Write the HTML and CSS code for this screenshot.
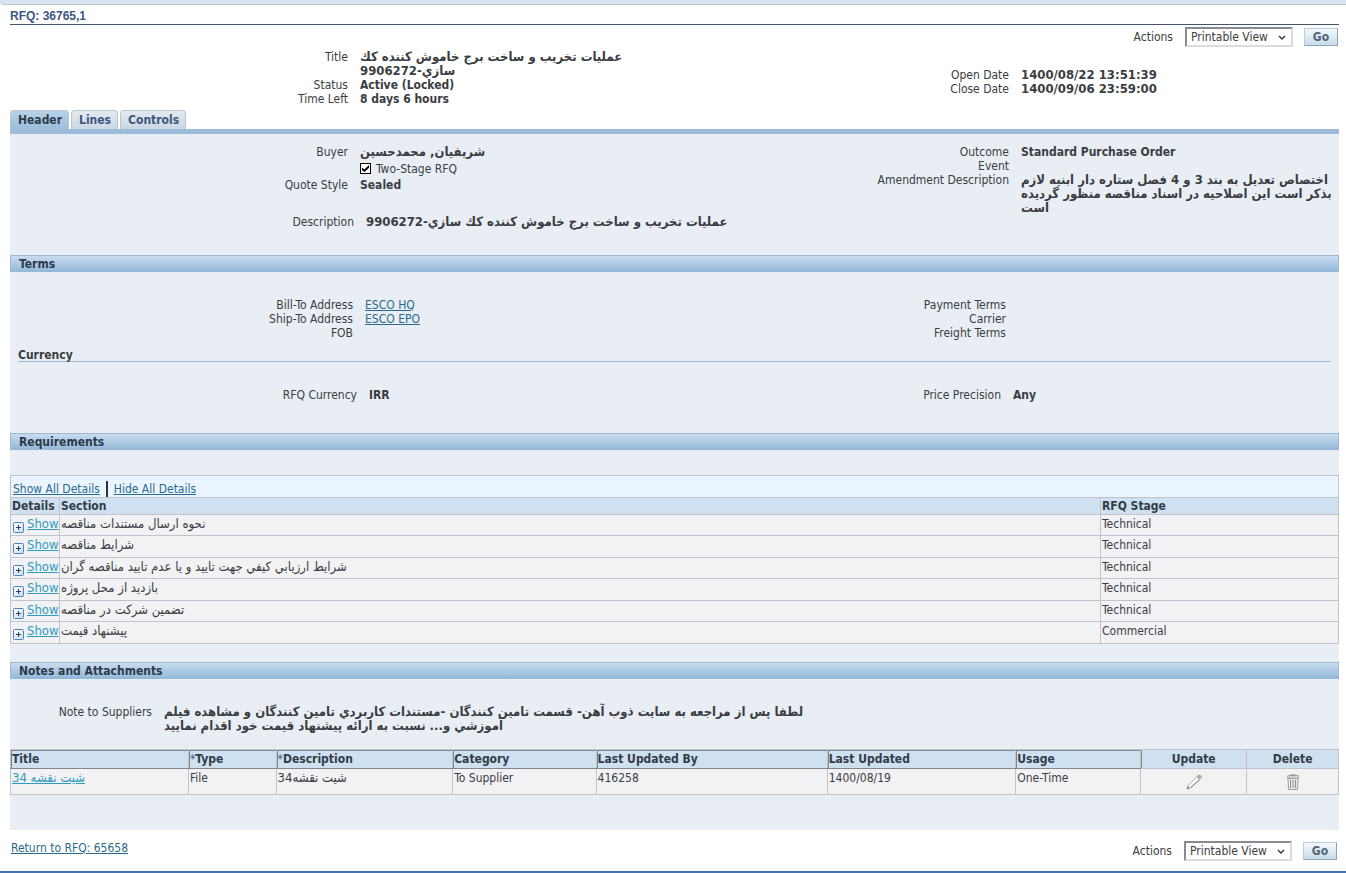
FILE: index.html
```html
<!DOCTYPE html>
<html lang="en">
<head>
<meta charset="utf-8">
<title>RFQ: 36765,1</title>
<link rel="stylesheet" href="styles.css">
</head>
<body>
<svg class="sprite" aria-hidden="true">
  <defs>
    <linearGradient id="plus-fill" x1="0" y1="0" x2="1" y2="1">
      <stop offset="0" stop-color="#ffffff"/>
      <stop offset="1" stop-color="#c3dcf2"/>
    </linearGradient>
    <symbol id="plus" viewBox="0 0 11 11">
      <rect x="0.5" y="0.5" width="10" height="10" rx="1" fill="url(#plus-fill)" stroke="#4d82ba"/>
      <path d="M3 5.5h5M5.500 3v5" stroke="#2e4055" fill="none"/>
    </symbol>
    <symbol id="chevron" viewBox="0 0 8 6">
      <path d="M1 1l3 3 3-3" stroke="#3a3a3a" stroke-width="1.5" fill="none"/>
    </symbol>
  </defs>
</svg>
<div class="topbar"></div>
<main class="page">
  <h1 class="page-title">RFQ: 36765,1</h1>
  <form class="actions">
    <label for="actions-top">Actions</label>
    <span class="select-box">
      <select id="actions-top"><option>Printable View</option></select>
      <svg class="chevron" aria-hidden="true"><use href="#chevron"/></svg>
    </span>
    <button class="go" type="button">Go</button>
  </form>

  <div class="columns summary">
    <dl class="fields">
      <dt>Title</dt><dd class="wide">عمليات تخريب و ساخت برج خاموش كننده كك<br>سازي-9906272</dd>
      <dt>Status</dt><dd>Active (Locked)</dd>
      <dt>Time Left</dt><dd>8 days 6 hours</dd>
    </dl>
    <dl class="fields dates">
      <dt>Open Date</dt><dd class="wide">1400/08/22 13:51:39</dd>
      <dt>Close Date</dt><dd class="wide">1400/09/06 23:59:00</dd>
    </dl>
  </div>

  <nav class="tabs">
    <a class="tab active" href="#">Header</a>
    <a class="tab" href="#">Lines</a>
    <a class="tab" href="#">Controls</a>
  </nav>

  <div class="panel">
    <div class="columns overview">
      <dl class="fields">
        <dt>Buyer</dt><dd class="wide">شريفيان, محمدحسين</dd>
        <dt></dt><dd class="check-row"><input class="check" type="checkbox" id="two-stage" checked><label for="two-stage">Two-Stage RFQ</label></dd>
        <dt>Quote Style</dt><dd>Sealed</dd>
      </dl>
      <dl class="fields">
        <dt>Outcome</dt><dd>Standard Purchase Order</dd>
        <dt>Event</dt><dd></dd>
        <dt>Amendment Description</dt><dd class="wide">اختصاص تعديل به بند 3 و 4 فصل ستاره دار ابنيه لازم<br>بذكر است اين اصلاحيه در اسناد مناقصه منظور گرديده<br>است</dd>
      </dl>
    </div>
    <dl class="fields description">
      <dt>Description</dt><dd class="wide">عمليات تخريب و ساخت برج خاموش كننده كك سازي-9906272</dd>
    </dl>

    <h2 class="section">Terms</h2>
    <div class="columns terms">
      <dl class="fields">
        <dt>Bill-To Address</dt><dd><a href="#">ESCO HQ</a></dd>
        <dt>Ship-To Address</dt><dd><a href="#">ESCO EPO</a></dd>
        <dt>FOB</dt><dd></dd>
      </dl>
      <dl class="fields">
        <dt>Payment Terms</dt><dd></dd>
        <dt>Carrier</dt><dd></dd>
        <dt>Freight Terms</dt><dd></dd>
      </dl>
    </div>
    <h3 class="subsection">Currency</h3>
    <div class="columns currency">
      <dl class="fields"><dt>RFQ Currency</dt><dd>IRR</dd></dl>
      <dl class="fields"><dt>Price Precision</dt><dd>Any</dd></dl>
    </div>

    <h2 class="section">Requirements</h2>
    <div class="toolbar">
      <a href="#">Show All Details</a><span class="divider"></span><a href="#">Hide All Details</a>
    </div>
    <table class="grid requirements">
      <colgroup><col class="c-details"><col><col class="c-stage"></colgroup>
      <thead><tr><th>Details</th><th>Section</th><th>RFQ Stage</th></tr></thead>
      <tbody>
        <tr><td><a class="show" href="#"><svg class="plus"><use href="#plus"/></svg><span>Show</span></a></td><td class="wide">نحوه ارسال مستندات مناقصه</td><td>Technical</td></tr>
        <tr><td><a class="show" href="#"><svg class="plus"><use href="#plus"/></svg><span>Show</span></a></td><td class="wide">شرايط مناقصه</td><td>Technical</td></tr>
        <tr><td><a class="show" href="#"><svg class="plus"><use href="#plus"/></svg><span>Show</span></a></td><td class="wide">شرايط ارزيابي كيفي جهت تاييد و يا عدم تاييد مناقصه گران</td><td>Technical</td></tr>
        <tr><td><a class="show" href="#"><svg class="plus"><use href="#plus"/></svg><span>Show</span></a></td><td class="wide">بازديد از محل پروژه</td><td>Technical</td></tr>
        <tr><td><a class="show" href="#"><svg class="plus"><use href="#plus"/></svg><span>Show</span></a></td><td class="wide">تضمين شركت در مناقصه</td><td>Technical</td></tr>
        <tr><td><a class="show" href="#"><svg class="plus"><use href="#plus"/></svg><span>Show</span></a></td><td class="wide">پيشنهاد قيمت</td><td>Commercial</td></tr>
      </tbody>
    </table>

    <h2 class="section">Notes and Attachments</h2>
    <dl class="fields note">
      <dt>Note to Suppliers</dt><dd class="wide">لطفا پس از مراجعه به سايت ذوب آهن- قسمت تامين كنندگان -مستندات كاربردي تامين كنندگان و مشاهده فيلم<br>آموزشي و... نسبت به ارائه پيشنهاد قيمت خود اقدام نماييد</dd>
    </dl>
    <table class="grid attachments">
      <colgroup><col class="a-title"><col class="a-type"><col class="a-desc"><col class="a-cat"><col class="a-by"><col class="a-date"><col class="a-usage"><col class="a-update"><col></colgroup>
      <thead><tr>
        <th class="sortable">Title</th>
        <th class="sortable"><span class="req">*</span>Type</th>
        <th class="sortable"><span class="req">*</span>Description</th>
        <th class="sortable">Category</th>
        <th class="sortable">Last Updated By</th>
        <th class="sortable">Last Updated</th>
        <th class="sortable">Usage</th>
        <th class="center edge">Update</th>
        <th class="center">Delete</th>
      </tr></thead>
      <tbody><tr>
        <td class="wide"><a class="light" href="#">شيت نقشه 34</a></td>
        <td>File</td>
        <td class="wide">شيت نقشه34</td>
        <td>To Supplier</td>
        <td>416258</td>
        <td>1400/08/19</td>
        <td>One-Time</td>
        <td class="center"><button class="icon" type="button" aria-label="Update" disabled><svg width="16" height="16" viewBox="0 0 16 16"><path d="M1 15l1.500-4L11 2.500Q13 .5 14.500 1.500T14.500 5L5 13.500Z" fill="#fbfbfb" stroke="#a4a4a4" stroke-width=".9"/><path d="M10.500 3L13 .8q2 0 2.200 2.200L13 5.500Z" fill="#a9a9a9"/><path d="M5 13.500L13.500 5.500" stroke="#7d7d7d" fill="none"/><path d="M1 15l1-2.500L3.500 14Z" fill="#666"/></svg></button></td>
        <td class="center"><button class="icon" type="button" aria-label="Delete" disabled><svg width="16" height="16" viewBox="0 0 16 16"><path d="M3 4.500h10l-.5 11h-9Z" fill="#ececec" stroke="#9c9c9c"/><rect x="2.500" y="1.500" width="11" height="3" rx="1" fill="#d0d0d0" stroke="#9c9c9c"/><path d="M6 1.500V.5h4v1" fill="none" stroke="#aaa"/><path d="M5.500 6v8M8 6v8M10.500 6v8" stroke="#8c8c8c"/></svg></button></td>
      </tr></tbody>
    </table>
  </div>

  <footer class="footer">
    <a href="#">Return to RFQ: 65658</a>
    <form class="actions">
      <label for="actions-bottom">Actions</label>
      <span class="select-box">
        <select id="actions-bottom"><option>Printable View</option></select>
        <svg class="chevron" aria-hidden="true"><use href="#chevron"/></svg>
      </span>
      <button class="go" type="button">Go</button>
    </form>
  </footer>
</main>
<div class="bottom-rule"></div>
</body>
</html>
```
FILE: styles.css
```css
* { box-sizing: border-box; }
body, h1, h2, h3, dl, dd { margin: 0; }
body {
  background: #fff;
  color: #3a3d42;
  font: 12px/14px "DejaVu Sans Condensed", "DejaVu Sans", "Noto Sans", sans-serif;
}
.sprite { position: absolute; width: 0; height: 0; }
a { color: #2a6a8c; }
.wide { font-size: 13px; }
.topbar {
  height: 5px;
  background: #d8e4ee;
  border-bottom: 1px solid #b4c6d4;
  border-bottom-left-radius: 4px;
}
.page { margin: 0 7px 0 10px; }
.page-title {
  height: 20px;
  padding-top: 4px;
  border-bottom: 1px solid #44546c;
  color: #3c5583;
  font: bold 12px/14px "Liberation Sans", Arial, sans-serif;
}

/* Actions bar */
.actions {
  display: flex;
  justify-content: flex-end;
  align-items: center;
  padding: 2px 1px 0 0;
}
.select-box { position: relative; margin: 0 11px 0 12px; }
select {
  display: block;
  appearance: none;
  width: 108px;
  height: 20px;
  padding: 0 4px;
  background: #fff;
  border: 2px solid;
  border-color: #8a8a92 #dcdcdc #dcdcdc #8a8a92;
  border-radius: 0;
  color: inherit;
  font: inherit;
}
.chevron {
  position: absolute;
  right: 7px;
  top: 8px;
  width: 8px;
  height: 6px;
  pointer-events: none;
}
.go {
  width: 34px;
  height: 18px;
  padding: 0;
  background: linear-gradient(#f4f9fc, #c5dcea);
  border: 1px solid;
  border-color: #bccbd8 #8ea3b5 #8ea3b5 #bccbd8;
  color: #566478;
  font: inherit;
  font-weight: bold;
}

/* Label and value pairs */
.columns { display: grid; grid-template-columns: 661fr 668fr; }
.fields {
  display: grid;
  grid-template-columns: 338px minmax(0, 1fr);
  column-gap: 12px;
  align-content: start;
}
dt { text-align: right; white-space: nowrap; }
dd { min-height: 14px; font-weight: bold; white-space: nowrap; }
dd a { font-weight: normal; }
.summary { margin-top: 3px; }
.dates { padding-top: 18px; }
.description { grid-template-columns: 344px minmax(0, 1fr); margin-bottom: 26px; }
.terms { padding-top: 26px; }
.terms .fields { grid-template-columns: 343px minmax(0, 1fr); }
.terms .fields + .fields { grid-template-columns: 335px minmax(0, 1fr); }
.currency { margin: 26px 0 31px; }
.currency .fields { grid-template-columns: 347px minmax(0, 1fr); }
.currency .fields + .fields { grid-template-columns: 330px minmax(0, 1fr); }
.note { grid-template-columns: 142px minmax(0, 1fr); margin: 26px 0 16px; }
.check-row {
  display: flex;
  align-items: center;
  gap: 5px;
  height: 19px;
  font-weight: normal;
}
.check {
  appearance: none;
  position: relative;
  width: 11px;
  height: 11px;
  margin: 0;
  background: #fff;
  border: 1px solid #000;
}
.check:checked::before {
  content: "";
  position: absolute;
  inset: 1px;
  background: #000;
  clip-path: polygon(0 35%, 35% 65%, 100% 0, 100% 38%, 35% 100%, 0 70%);
}

/* Tabs */
.tabs { display: flex; gap: 2px; height: 19px; margin-top: 4px; }
.tab {
  padding: 2px 6px 0 7px;
  background: linear-gradient(#e3e9ef, #cbd8e5);
  border: 1px solid #bcc6cf;
  border-bottom: 0;
  border-radius: 4px 4px 0 0;
  color: #405680;
  font-weight: bold;
  line-height: 14px;
  text-decoration: none;
}
.tab.active { background: linear-gradient(#b7d2e8, #9cbedb); color: #2f3b4c; }

.panel {
  padding-bottom: 35px;
  background: #e9eef5;
  border-top: 5px solid #9cbcd9;
}
.overview { padding-top: 11px; }
.section {
  height: 17px;
  padding: 1px 8px;
  background: linear-gradient(#c8dcee, #92b7d8);
  border: 1px solid #9db8d0;
  border-bottom: 0;
  color: #2c3a49;
  font-size: 12px;
  line-height: 15px;
}
.subsection {
  margin: 9px 8px 0;
  border-bottom: 1px solid #9fb8cf;
  font-size: 12px;
  line-height: 12px;
}

/* Tables */
.toolbar {
  display: flex;
  align-items: center;
  gap: 6px;
  height: 22px;
  margin-top: 25px;
  padding: 4px 2px 0;
  background: #ebf5ff;
  border: 1px solid #c0c6ce;
  border-bottom: 0;
}
.divider { width: 2px; height: 16px; background: #333; }
.grid { width: 100%; border-collapse: collapse; table-layout: fixed; }
.grid th, .grid td {
  padding: 2px 1px 0;
  border: 1px solid #c0c4cc;
  text-align: left;
  vertical-align: top;
  white-space: nowrap;
}
.grid th { height: 17px; padding-top: 1px; background: #cfe0f0; color: #323c48; }
.grid td { height: 21px; background: #f2f2f5; }
.grid .center { text-align: center; }
.requirements { margin-bottom: 18px; }
.requirements tr:nth-child(even) td { height: 22px; }
.c-details { width: 49px; }
.c-stage { width: 238px; }
.show {
  display: flex;
  gap: 3px;
  height: 16px;
  padding-left: 1px;
  color: #2f9bc0;
  font-size: 13px;
}
.light { color: #2f9bc0; }
.plus { width: 11px; height: 11px; margin-top: 5px; flex: none; }
.attachments th { height: 19px; padding-top: 2px; }
.attachments td { height: 26px; }
.attachments .sortable { box-shadow: inset 1px 1px #80868c; border-bottom-color: #80868c; }
.attachments .edge { box-shadow: inset 1px 0 #80868c; }
.req { color: #3c5f95; font-weight: normal; }
.a-title { width: 13.4%; }
.a-type { width: 6.6%; }
.a-desc { width: 13.3%; }
.a-cat { width: 10.8%; }
.a-by { width: 17.4%; }
.a-date { width: 14.2%; }
.a-usage { width: 9.4%; }
.a-update { width: 8%; }
.icon { padding: 3px 0 0; background: none; border: 0; }
.icon svg { display: block; }

.footer {
  display: flex;
  justify-content: space-between;
  align-items: flex-start;
  padding: 11px 1px 10px;
}
.footer .actions { padding-top: 0; }
.bottom-rule { height: 2px; background: #4674b0; }
```
